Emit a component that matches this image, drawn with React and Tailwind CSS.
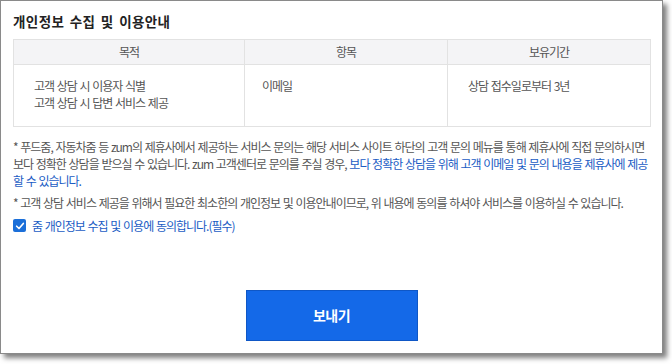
import React from "react";

const FONT = { fontFamily: "'Noto Sans CJK KR', 'Noto Sans', sans-serif" };

const Cell = ({ children, className = "" }) => (
  <div className={`border-r border-b border-[#e2e2e2] ${className}`}>{children}</div>
);

export default function App() {
  return (
    <div className="w-[672px] h-[364px] bg-white" style={FONT}>
      <div className="w-[663px] h-[354px] border border-[#8a8a8a] bg-white shadow-[4px_4px_5px_rgba(0,0,0,0.5)] pl-[12px] pt-[11px] flex flex-col">
        <h2 className="h-[18px] leading-[18px] text-[13.5px] font-bold text-[#222] tracking-[0.4px] [word-spacing:2px]">
          개인정보 수집 및 이용안내
        </h2>

        {/* table */}
        <div className="mt-[9px] w-[638px] border-t border-l border-[#e2e2e2] grid grid-cols-[231px_203px_203px] text-[12px] text-[#555] tracking-[-1px] [word-spacing:1px]">
          <Cell className="h-[25px] bg-[#f4f4f6] flex items-center justify-center">목적</Cell>
          <Cell className="h-[25px] bg-[#f4f4f6] flex items-center justify-center">항목</Cell>
          <Cell className="h-[25px] bg-[#f4f4f6] flex items-center justify-center">보유기간</Cell>

          <Cell className="h-[62px] pl-[20px] pt-[12px] leading-[17px]">
            <p>고객 상담 시 이용자 식별</p>
            <p>고객 상담 시 답변 서비스 제공</p>
          </Cell>
          <Cell className="h-[62px] pl-[17px] pt-[12px] leading-[17px]">이메일</Cell>
          <Cell className="h-[62px] pl-[20px] pt-[12px] leading-[17px]">상담 접수일로부터 3년</Cell>
        </div>

        {/* notes */}
        <div className="mt-[11px] text-[12px] leading-[17px] text-[#555] tracking-[-1px] [word-spacing:1px] whitespace-nowrap">
          <p>
            * 푸드줌, 자동차줌 등 zum의 제휴사에서 제공하는 서비스 문의는 해당 서비스 사이트 하단의 고객 문의 메뉴를 통해 제휴사에 직접 문의하시면
            <br />
            보다 정확한 상담을 받으실 수 있습니다. zum 고객센터로 문의를 주실 경우,{" "}
            <span className="text-[#1a5cc4]">보다 정확한 상담을 위해 고객 이메일 및 문의 내용을 제휴사에 제공</span>
            <br />
            <span className="text-[#1a5cc4]">할 수 있습니다.</span>
          </p>
          <p className="mt-[5px]">
            * 고객 상담 서비스 제공을 위해서 필요한 최소한의 개인정보 및 이용안내이므로, 위 내용에 동의를 하셔야 서비스를 이용하실 수 있습니다.
          </p>
          <label className="mt-[6px] flex items-center gap-[6px] text-[#1a5cc4]">
            <span className="w-[13px] h-[13px] rounded-[2px] bg-[#1b6fd9] flex items-center justify-center">
              <svg viewBox="0 0 12 12" className="w-[10px] h-[10px]">
                <path d="M2 6.3 L4.8 9 L10 3" fill="none" stroke="white" strokeWidth="2" strokeLinecap="round" strokeLinejoin="round" />
              </svg>
            </span>
            줌 개인정보 수집 및 이용에 동의합니다.(필수)
          </label>
        </div>

        <div className="mt-[56px] pr-[12px] flex justify-center">
          <button className="w-[172px] h-[51px] bg-[#1469e8] border border-[#0f57c6] text-white text-[14px] font-bold tracking-[-0.5px]">
            보내기
          </button>
        </div>
      </div>
    </div>
  );
}
